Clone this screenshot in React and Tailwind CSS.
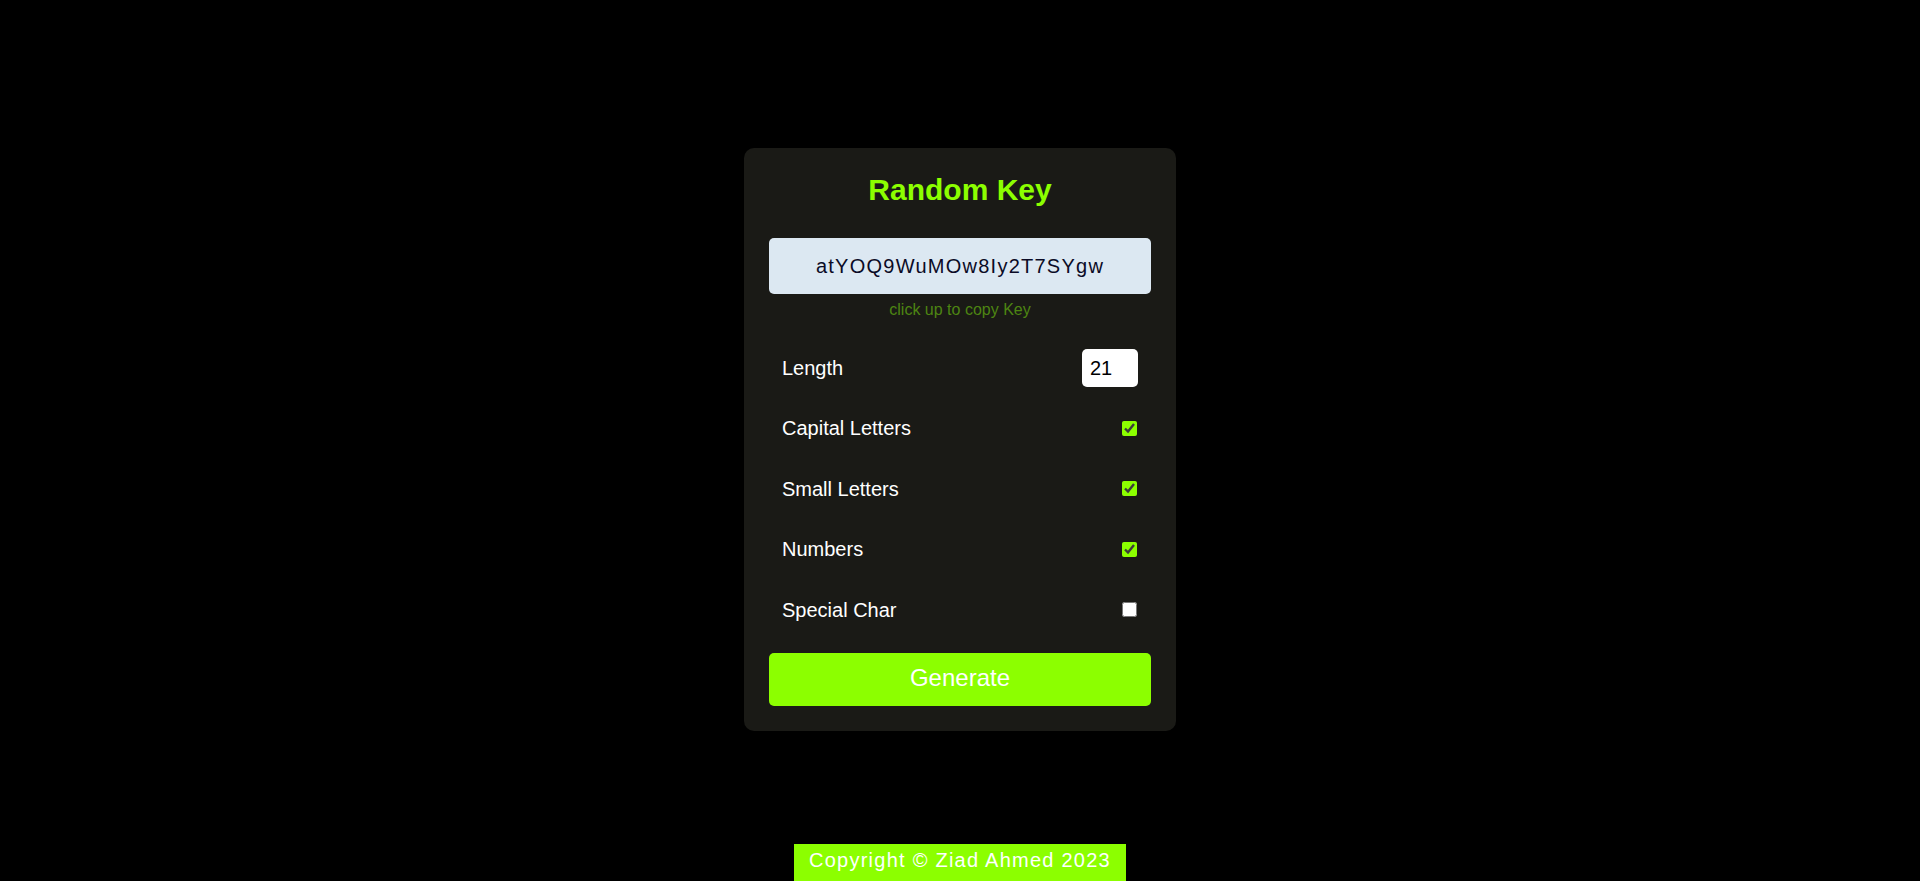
import { useState } from 'react';

const FONT = { fontFamily: '"Liberation Sans", Arial, sans-serif' };

const OPTIONS = [
  { id: 'upper', label: 'Capital Letters', checked: true },
  { id: 'lower', label: 'Small Letters', checked: true },
  { id: 'numbers', label: 'Numbers', checked: true },
  { id: 'special', label: 'Special Char', checked: false },
];

export default function App() {
  const [length, setLength] = useState(21);
  const [opts, setOpts] = useState(
    Object.fromEntries(OPTIONS.map(o => [o.id, o.checked]))
  );

  return (
    <div
      className="h-screen overflow-hidden bg-black flex flex-col items-center pt-[148px]"
      style={FONT}
    >
      {/* Card */}
      <div className="w-[432px] bg-[#1a1a16] rounded-[10px] px-[25px] pt-[25px] pb-[25px]">
        <h1 className="text-[30px] leading-[34px] font-bold text-[#8cff00] text-center">
          Random Key
        </h1>

        <div className="mt-[31px] h-[56px] rounded-[5px] bg-[#dce8f2] flex items-center justify-center text-[20px] tracking-[1.25px] text-[#0b0b26]">
          atYOQ9WuMOw8Iy2T7SYgw
        </div>
        <p className="mt-[7px] text-[16px] leading-[18px] text-[#4d8512] text-center">
          click up to copy Key
        </p>

        <div className="mt-[19px] flex flex-col">
          {/* Length */}
          <div className="h-[60px] px-[13px] flex items-center justify-between text-white text-[20px]">
            <span>Length</span>
            <input
              type="number"
              value={length}
              onChange={e => setLength(e.target.value)}
              className="w-[56px] h-[38px] rounded-[5px] bg-white text-black text-[20px] pl-[8px] outline-none [appearance:textfield] [&::-webkit-inner-spin-button]:appearance-none"
              style={FONT}
            />
          </div>

          {OPTIONS.map(o => (
            <div
              key={o.id}
              className="h-[60.5px] px-[13px] flex items-center justify-between text-white text-[20px]"
            >
              <span>{o.label}</span>
              <input
                type="checkbox"
                checked={opts[o.id]}
                onChange={() => setOpts({ ...opts, [o.id]: !opts[o.id] })}
                className="w-[15px] h-[15px] m-0 mr-[1px] accent-[#8cff00]"
              />
            </div>
          ))}
        </div>

        <button className="mt-[13px] w-full h-[53px] pb-[3px] rounded-[5px] bg-[#8cff00] text-white text-[24px]">
          Generate
        </button>
      </div>

      {/* Footer */}
      <footer className="mt-[113px] bg-[#8cff00] text-white text-[20px] leading-[23px] tracking-[1.25px] px-[15px] pt-[5px] pb-[12px]">
        Copyright © Ziad Ahmed 2023
      </footer>
    </div>
  );
}
